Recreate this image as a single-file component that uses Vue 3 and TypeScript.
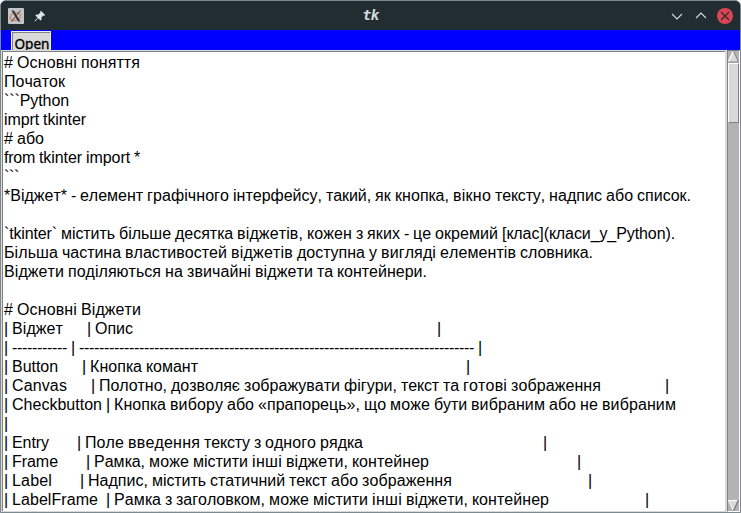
<script setup lang="ts">
interface Token {
  text: string
  spacing: number
}

const row = (name: string, description: string): string =>
  `| ${name.padEnd(11)} | ${description.padEnd(79)} |`

const lines: string[] = [
  '# Основні поняття',
  'Початок',
  '```Python',
  'imprt tkinter',
  '# або',
  'from tkinter import *',
  '```',
  '*Віджет* - елемент графічного інтерфейсу, такий, як кнопка, вікно тексту, надпис або список.',
  '',
  '`tkinter` містить більше десятка віджетів, кожен з яких - це окремий [клас](класи_у_Python).',
  'Більша частина властивостей віджетів доступна у вигляді елементів словника.',
  'Віджети поділяються на звичайні віджети та контейнери.',
  '',
  '# Основні Віджети',
  row('Віджет', 'Опис'),
  row('-'.repeat(11), '-'.repeat(79)),
  row('Button', 'Кнопка комант'),
  row('Canvas', 'Полотно, дозволяє зображувати фігури, текст та готові зображення'),
  '| Checkbutton | Кнопка вибору або «прапорець», що може бути вибраним або не вибраним',
  '|',
  row('Entry', 'Поле введення тексту з одного рядка'),
  row('Frame', 'Рамка, може містити інші віджети, контейнер'),
  row('Label', 'Надпис, містить статичний текст або зображення'),
  row('LabelFrame', 'Рамка з заголовком, може містити інші віджети, контейнер'),
]

// The text widget advances by whole pixels per glyph, so each word gets
// the spacing that brings it to the sum of its rounded glyph widths.
const context = document.createElement('canvas').getContext('2d')!
context.font = '16px "Liberation Sans", Arial, sans-serif'

const tokenize = (line: string): Token[] =>
  (line.match(/\s+|\S+/g) ?? []).map((text) => {
    const drift = [...text].reduce((sum, char) => {
      const width = context.measureText(char).width
      return sum + Math.round(width) - width
    }, 0)
    return { text, spacing: drift / text.length }
  })

const content = lines.map(tokenize)
</script>

<template>
  <div class="window">
    <header class="titlebar">
      <div class="side">
        <svg class="app-icon" width="16" height="16" viewBox="0 0 16 16">
          <rect width="16" height="16" rx="1" fill="#c2c6c8" />
          <ellipse cx="7.2" cy="8.6" rx="5.2" ry="3.7" fill="none" stroke="#df7b52" stroke-width="1.3" transform="rotate(-20 7.5 8.5)" />
          <path d="M3.500 2.500h2.400l6.600 11h-2.400z" fill="#30363a" />
          <path d="M12.500 2.500 3.500 13.500" stroke="#30363a" stroke-width=".9" />
        </svg>
        <svg class="pin" width="12" height="12" viewBox="0 0 12 12">
          <path d="M7 .8 11.2 5l-.8.8-1-.2-2 2 .2 2-1 1L4.200 8.300.9 11.500.4 11 3.600 7.700 1.400 5.400l1-1 2 .2 2-2-.2-1z" fill="#dfe5e7" />
        </svg>
      </div>
      <div class="title">tk</div>
      <div class="side controls">
        <svg width="12" height="12" viewBox="0 0 12 12"><path d="M1 4l5 5 5-5" /></svg>
        <svg width="12" height="12" viewBox="0 0 12 12"><path d="M1 8l5-5 5 5" /></svg>
        <svg class="close" width="16" height="16" viewBox="0 0 16 16">
          <circle cx="8" cy="8" r="8" />
          <path d="M4 4l8 8M12 4l-8 8" />
        </svg>
      </div>
    </header>
    <div class="toolbar"><button class="open">Open</button></div>
    <main class="body">
      <div class="text">
        <div v-for="(tokens, i) in content" :key="i" class="line"><span v-for="(token, j) in tokens" :key="j" :style="{ letterSpacing: `${token.spacing}px` }">{{ token.text }}</span></div>
      </div>
      <div class="scrollbar">
        <svg width="11" height="12" viewBox="0 0 11 12">
          <path d="M5.500 0 11 11.500H0z" fill="#d9d9d9" />
          <path d="M0 11.500 5.500 0" stroke="#fff" stroke-width="1.400" />
          <path d="M5.500 0 10.500 11H0" fill="none" stroke="#828282" />
        </svg>
        <div class="thumb"></div>
        <div class="trough"></div>
        <svg width="11" height="11" viewBox="0 0 11 11">
          <path d="M0 0h11L5.500 11z" fill="#d9d9d9" />
          <path d="M5.500 11 .5.500H11" fill="none" stroke="#fff" />
          <path d="M10.500 0 5.500 11" stroke="#828282" stroke-width="1.400" />
        </svg>
      </div>
    </main>
  </div>
</template>

<style>
body {
  margin: 0;
  overflow: hidden;
  background: #fff;
}
</style>

<style scoped>
.window {
  box-sizing: border-box;
  width: 741px;
  height: 513px;
  display: flex;
  flex-direction: column;
  border: 1px solid #7c898d;
  border-radius: 6px 6px 0 0;
  overflow: hidden;
  background: #222d32;
}
.titlebar {
  flex: none;
  height: 29px;
  display: flex;
  align-items: center;
  background: #222d32;
}
.side {
  flex: 1;
  display: flex;
  align-items: center;
  gap: 10px;
  padding: 0 7px;
}
.title {
  color: #d3dadd;
  font: italic bold 14.5px/27px "DejaVu Sans Mono", monospace;
  letter-spacing: -0.7px;
}
.controls {
  justify-content: flex-end;
  gap: 12px;
}
.controls .close {
  margin-left: -2px;
}
.controls path {
  fill: none;
  stroke: #d3dadd;
  stroke-width: 1.1;
}
.close circle {
  fill: #dc4453;
}
.controls .close path {
  stroke: #222d32;
}
.toolbar {
  flex: none;
  box-sizing: border-box;
  height: 20px;
  padding: 1px 0 0 10px;
  overflow: hidden;
  background: #00f;
}
.open {
  display: block;
  box-sizing: border-box;
  width: 40px;
  height: 26px;
  padding: 0 0 0 2px;
  border: 1px solid #eee;
  border-radius: 0;
  box-shadow: inset 1px 1px #828282;
  background: #d9d9d9;
  color: #000;
  font: 400 13.6px/22px "Noto Sans", sans-serif;
  -webkit-text-stroke: 0.35px #000;
  text-align: center;
}
.body {
  flex: 1;
  min-height: 0;
  display: flex;
}
.text {
  flex: 1;
  box-sizing: border-box;
  min-width: 0;
  padding: 2px 0 0 2px;
  border: 1px solid #d9d9d9;
  border-right-width: 2px;
  box-shadow: inset 1px 1px #828282;
  overflow: hidden;
  background: #fff;
}
.line {
  height: 19px;
  white-space: pre;
  color: #000;
  font: 16px/19px "Liberation Sans", Arial, sans-serif;
  font-kerning: none;
}
.scrollbar {
  flex: none;
  box-sizing: border-box;
  width: 13px;
  display: flex;
  flex-direction: column;
  border: 1px solid #828282;
  border-right-color: #fff;
  border-bottom-color: #fff;
  background: #b3b3b3;
}
.scrollbar svg {
  display: block;
  flex: none;
}
.thumb {
  flex: none;
  box-sizing: border-box;
  height: 60px;
  border: 1px solid #fff;
  border-right-color: #828282;
  border-bottom-color: #828282;
  background: #d9d9d9;
}
.trough {
  flex: 1;
}
</style>
